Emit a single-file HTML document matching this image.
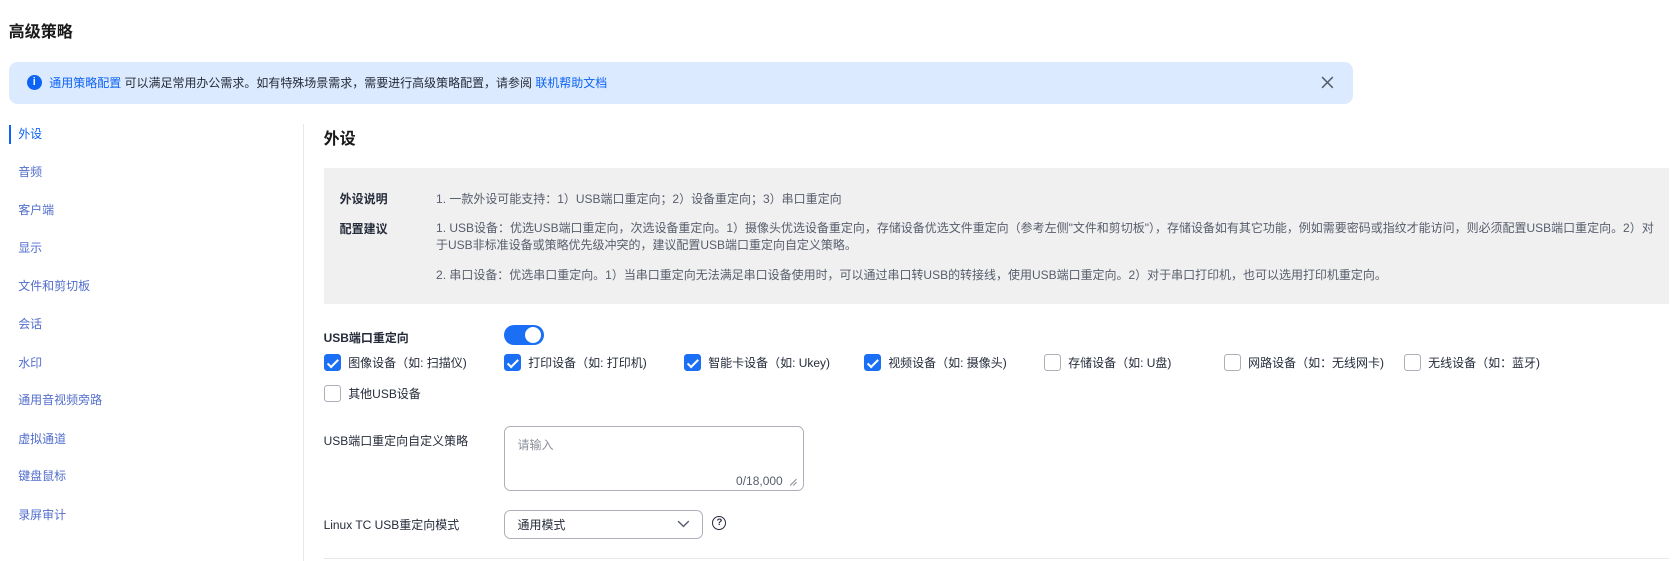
<!DOCTYPE html>
<html><head><meta charset="utf-8"><style>
*{box-sizing:border-box;margin:0;padding:0}
html,body{width:1680px;height:561px;overflow:hidden;background:#fff}
#w{zoom:1.0714;width:1568px;height:524px;position:relative;font-family:"Liberation Sans","Noto Sans CJK SC",sans-serif;font-size:11.2px;color:#252b3a}
.a{position:absolute;white-space:nowrap}
.blue{color:#0d63f3}
.nav{color:#526ecc}
.cb{position:absolute;width:16px;height:16px;border-radius:3px;border:1px solid #adb0b8;background:#fff}
.cb.on{background:#1a6ff5;border-color:#1a6ff5}
.cb.on:after{content:"";position:absolute;left:5px;top:2px;width:4px;height:8px;border:solid #fff;border-width:0 2px 2px 0;transform:rotate(45deg)}
.cl{position:absolute;color:#252b3a;white-space:nowrap}
.g{color:#575d6c}
</style></head><body><div id="w">
<div class="a" style="left:8px;top:17px;font-size:15px;font-weight:bold;color:#191919">高级策略</div>
<div class="a" style="left:8px;top:58px;width:1255px;height:39px;background:#dceaff;border-radius:8px"></div>
<div class="a" style="left:25px;top:70px;width:14px;height:14px;border-radius:50%;background:#0d63f3;color:#fff;font-size:10px;font-weight:bold;text-align:center;line-height:14px">i</div>
<div class="a" style="left:46px;top:69px"><span class="blue">通用策略配置</span> 可以满足常用办公需求。如有特殊场景需求，需要进行高级策略配置，请参阅 <span class="blue">联机帮助文档</span></div>
<svg class="a" style="left:1233px;top:71px" width="12" height="12"><path d="M1 1L11 11M11 1L1 11" stroke="#575d6c" stroke-width="1.4"/></svg>

<div class="a" style="left:8px;top:117px;width:2px;height:17px;background:#0d63f3"></div>
<div class="a" style="left:17px;top:117px;color:#0d63f3">外设</div>
<div class="a nav" style="left:17px;top:152px">音频</div>
<div class="a nav" style="left:17px;top:188px">客户端</div>
<div class="a nav" style="left:17px;top:223px">显示</div>
<div class="a nav" style="left:17px;top:259px">文件和剪切板</div>
<div class="a nav" style="left:17px;top:294px">会话</div>
<div class="a nav" style="left:17px;top:330px">水印</div>
<div class="a nav" style="left:17px;top:365px">通用音视频旁路</div>
<div class="a nav" style="left:17px;top:401px">虚拟通道</div>
<div class="a nav" style="left:17px;top:436px">键盘鼠标</div>
<div class="a nav" style="left:17px;top:472px">录屏审计</div>
<div class="a" style="left:283px;top:116px;width:1px;height:410px;background:#e8e8e8"></div>

<div class="a" style="left:302px;top:117px;font-size:15px;font-weight:bold;color:#191919">外设</div>
<div class="a" style="left:302px;top:157px;width:1256px;height:127px;background:#f0f0f0"></div>
<div class="a" style="left:317px;top:177px;font-weight:bold">外设说明</div>
<div class="a g" style="left:407px;top:177px">1. 一款外设可能支持：1）USB端口重定向；2）设备重定向；3）串口重定向</div>
<div class="a" style="left:317px;top:205px;font-weight:bold">配置建议</div>
<div class="a g" style="left:407px;top:205px;line-height:16px;white-space:normal;width:1140px">1. USB设备：优选USB端口重定向，次选设备重定向。1）摄像头优选设备重定向，存储设备优选文件重定向（参考左侧"文件和剪切板"），存储设备如有其它功能，例如需要密码或指纹才能访问，则必须配置USB端口重定向。2）对于USB非标准设备或策略优先级冲突的，建议配置USB端口重定向自定义策略。</div>
<div class="a g" style="left:407px;top:248px">2. 串口设备：优选串口重定向。1）当串口重定向无法满足串口设备使用时，可以通过串口转USB的转接线，使用USB端口重定向。2）对于串口打印机，也可以选用打印机重定向。</div>

<div class="a" style="left:302px;top:307px;font-weight:bold">USB端口重定向</div>
<div class="a" style="left:470px;top:303px;width:38px;height:19px;border-radius:10px;background:#1a6ff5"></div>
<div class="a" style="left:490px;top:305px;width:15px;height:15px;border-radius:50%;background:#fff"></div>

<div class="cb on" style="left:302px;top:330px"></div><div class="cl" style="left:325px;top:330px">图像设备（如: 扫描仪)</div>
<div class="cb on" style="left:470px;top:330px"></div><div class="cl" style="left:493px;top:330px">打印设备（如: 打印机)</div>
<div class="cb on" style="left:638px;top:330px"></div><div class="cl" style="left:661px;top:330px">智能卡设备（如: Ukey)</div>
<div class="cb on" style="left:806px;top:330px"></div><div class="cl" style="left:829px;top:330px">视频设备（如: 摄像头)</div>
<div class="cb" style="left:974px;top:330px"></div><div class="cl" style="left:997px;top:330px">存储设备（如: U盘)</div>
<div class="cb" style="left:1142px;top:330px"></div><div class="cl" style="left:1165px;top:330px">网路设备（如：无线网卡)</div>
<div class="cb" style="left:1310px;top:330px"></div><div class="cl" style="left:1333px;top:330px">无线设备（如：蓝牙)</div>
<div class="cb" style="left:302px;top:359px"></div><div class="cl" style="left:325px;top:359px">其他USB设备</div>

<div class="a" style="left:302px;top:403px">USB端口重定向自定义策略</div>
<div class="a" style="left:470px;top:398px;width:280px;height:60px;border:1px solid #adb0b8;border-radius:6px"></div>
<div class="a" style="left:483px;top:407px;color:#8a8e99">请输入</div>
<div class="a" style="left:687px;top:442px;color:#575d6c">0/18,000</div>
<svg class="a" style="left:736px;top:446px" width="8" height="8"><path d="M1 7L7 1M4 7L7 4" stroke="#8a8e99"/></svg>

<div class="a" style="left:302px;top:482px">Linux TC USB重定向模式</div>
<div class="a" style="left:470px;top:476px;width:186px;height:27px;border:1px solid #adb0b8;border-radius:6px"></div>
<div class="a" style="left:483px;top:482px">通用模式</div>
<svg class="a" style="left:632px;top:485px" width="12" height="8"><path d="M1 1L6 6L11 1" stroke="#575d6c" stroke-width="1.3" fill="none"/></svg>
<div class="a" style="left:665px;top:482px;width:13px;height:13px;border:1.3px solid #252b3a;border-radius:50%;font-size:9px;text-align:center;line-height:11px;font-weight:bold">?</div>
<div class="a" style="left:302px;top:521px;width:1256px;height:1px;background:#e8e8e8"></div>
</div></body></html>
